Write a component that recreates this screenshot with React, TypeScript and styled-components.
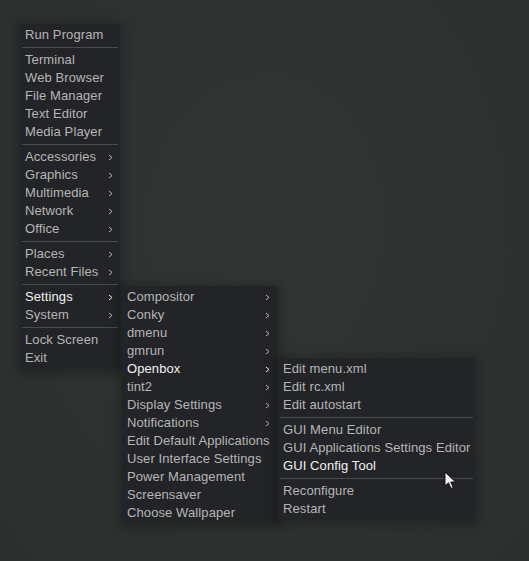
import React from "react";
import styled, { createGlobalStyle } from "styled-components";

type Item =
	| { kind: "sep" }
	| { kind: "item"; label: string; sub?: boolean; active?: boolean };

const item = (label: string, sub = false, active = false): Item => ({
	kind: "item",
	label,
	sub,
	active,
});
const sep: Item = { kind: "sep" };

const rootMenu: Item[] = [
	item("Run Program"),
	sep,
	item("Terminal"),
	item("Web Browser"),
	item("File Manager"),
	item("Text Editor"),
	item("Media Player"),
	sep,
	item("Accessories", true),
	item("Graphics", true),
	item("Multimedia", true),
	item("Network", true),
	item("Office", true),
	sep,
	item("Places", true),
	item("Recent Files", true),
	sep,
	item("Settings", true, true),
	item("System", true),
	sep,
	item("Lock Screen"),
	item("Exit"),
];

const settingsMenu: Item[] = [
	item("Compositor", true),
	item("Conky", true),
	item("dmenu", true),
	item("gmrun", true),
	item("Openbox", true, true),
	item("tint2", true),
	item("Display Settings", true),
	item("Notifications", true),
	item("Edit Default Applications"),
	item("User Interface Settings"),
	item("Power Management"),
	item("Screensaver"),
	item("Choose Wallpaper"),
];

const openboxMenu: Item[] = [
	item("Edit menu.xml"),
	item("Edit rc.xml"),
	item("Edit autostart"),
	sep,
	item("GUI Menu Editor"),
	item("GUI Applications Settings Editor"),
	item("GUI Config Tool", false, true),
	sep,
	item("Reconfigure"),
	item("Restart"),
];

const Arrow = () => (
	<svg width="5" height="7" viewBox="0 0 5 7">
		<path d="M1 1 L4 3.5 L1 6" fill="none" stroke="currentColor" strokeWidth="1" />
	</svg>
);

const Cursor = () => (
	<svg width="14" height="20" viewBox="0 0 14 20">
		<path
			d="M1 1 L1 15 L4.5 11.8 L7 17.5 L9.2 16.5 L6.8 11 L11.5 11 Z"
			fill="#f4f4f4"
			stroke="#111"
			strokeWidth="1"
			strokeLinejoin="round"
		/>
	</svg>
);

const MenuList = ({ items, x, y, width }: { items: Item[]; x: number; y: number; width: number }) => (
	<Menu style={{ left: x, top: y, width }}>
		{items.map((it, i) =>
			it.kind === "sep" ? (
				<Separator key={i} />
			) : (
				<Row key={i} $active={it.active}>
					<Label>{it.label}</Label>
					{it.sub ? <Arrow /> : null}
				</Row>
			)
		)}
	</Menu>
);

const App = () => {
	return (
		<>
			<GlobalStyle />
			<Desktop>
				<MenuList items={rootMenu} x={20} y={24} width={100} />
				<MenuList items={settingsMenu} x={122} y={286} width={155} />
				<MenuList items={openboxMenu} x={278} y={358} width={197} />
				<Pointer>
					<Cursor />
				</Pointer>
			</Desktop>
		</>
	);
};

export default App;

const GlobalStyle = createGlobalStyle`
	body {
		margin: 0;
		background-color: #2e3331;
		font-family: "Liberation Sans", Arial, sans-serif;
	}
`;

const Desktop = styled.div`
	position: relative;
	width: 529px;
	height: 561px;
	overflow: hidden;
	background: radial-gradient(ellipse at 50% 40%, #313634 0%, #2d3230 70%, #2b302e 100%);
`;

const Menu = styled.div`
	position: absolute;
	box-sizing: border-box;
	display: flex;
	flex-direction: column;
	padding: 2px 0 1px;
	background-color: #232427;
	box-shadow: 0 2px 10px 3px rgba(0, 0, 0, 0.28);
`;

const Row = styled.div<{ $active?: boolean }>`
	display: flex;
	align-items: center;
	justify-content: space-between;
	height: 18px;
	padding: 0 7px 0 5px;
	font-size: 13px;
	letter-spacing: 0.1px;
	color: ${({ $active }) => ($active ? "#f2f2f2" : "#b6b6b6")};
	white-space: nowrap;
`;

const Label = styled.span`
	line-height: 18px;
`;

const Separator = styled.div`
	height: 1px;
	margin: 3px 2px 3px;
	background-color: #4a4b4e;
`;

const Pointer = styled.div`
	position: absolute;
	left: 444px;
	top: 471px;
`;
